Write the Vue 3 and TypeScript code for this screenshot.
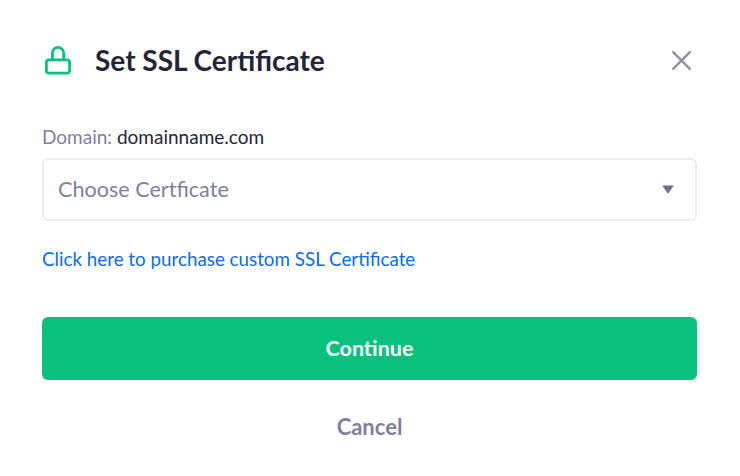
<script setup lang="ts">
const domain: string = 'domainname.com'
</script>

<template>
  <div class="modal">
    <header class="head">
      <svg class="lock" width="32" height="32" viewBox="0 0 32 32" fill="none" stroke="#09c17d" stroke-width="2.8" stroke-linecap="round" stroke-linejoin="round">
        <rect x="4.4" y="15.9" width="23.2" height="13.2" rx="2.6" />
        <path d="M10.4 15.9V8.9a5.6 5.6 0 0 1 11.2 0V15.9" />
      </svg>
      <h1 class="title">Set SSL Certificate</h1>
      <svg class="close" width="24" height="24" viewBox="0 0 24 24" fill="none" stroke="#8f8fa8" stroke-width="2.4" stroke-linecap="round">
        <path d="M3.2 4.2L19.8 20.8M19.8 4.2L3.2 20.8" />
      </svg>
    </header>
    <div class="label"><span class="muted">Domain:</span> <span class="domain">{{ domain }}</span></div>
    <div class="select">
      <span class="placeholder">Choose Certficate</span>
      <svg width="12" height="9" viewBox="0 0 12 9"><path d="M1 1H11L6 8Z" fill="#6f6c8f" stroke="#6f6c8f" stroke-linejoin="round" /></svg>
    </div>
    <div class="link">Click here to purchase custom SSL Certificate</div>
    <div class="primary"><span class="primary-text">Continue</span></div>
    <div class="cancel">Cancel</div>
  </div>
</template>

<style scoped>
.modal {
  width: 740px;
  height: 476px;
  box-sizing: border-box;
  padding: 43px 43px 0 42px;
  background: #fff;
  font-family: Lato, "Noto Sans", sans-serif;
  display: flex;
  flex-direction: column;
}
.head { display: flex; align-items: center; height: 34px; }
.lock { margin-right: 21px; }
.title { margin: 0; flex: 1; font-size: 28px; font-weight: 700; color: #25253a; }
.close { margin-right: 3px; }
.label { margin-top: 48px; height: 24px; line-height: 24px; font-size: 19px; }
.muted { color: #7f7f9f; }
.domain { color: #25253a; }
.select {
  margin-top: 9px;
  height: 63px;
  box-sizing: border-box;
  border: 2px solid #ececf4;
  border-radius: 6px;
  padding: 0 21px 0 14px;
  display: flex;
  align-items: center;
  justify-content: space-between;
  font-size: 21.6px;
  color: #7f7f9f;
}
.placeholder { margin-bottom: 2px; }
.link { margin-top: 26px; height: 24px; line-height: 24px; font-size: 18.8px; color: #0b6bf2; }
.primary {
  margin-top: 46px;
  height: 63px;
  border-radius: 6px;
  background: #09c17d;
  color: #fff;
  font-size: 21.5px;
  font-weight: 700;
  display: flex;
  align-items: center;
  justify-content: center;
}
.primary-text { margin-bottom: 2px; }
.cancel { margin-top: 32px; text-align: center; font-size: 22px; font-weight: 700; color: #7f7f9f; line-height: 30px; }
</style>
